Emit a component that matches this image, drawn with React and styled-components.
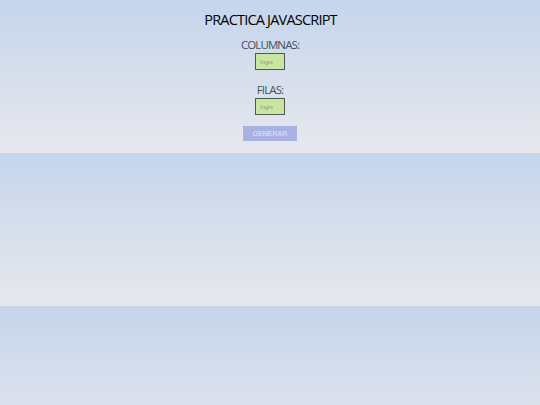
import styled, { createGlobalStyle } from 'styled-components';

const GlobalStyle = createGlobalStyle`
    html {
        background: linear-gradient(180deg, #c5d5ec 0%, #e7e8ec 100%);
        background-size: 100% 153px;
        background-repeat: repeat;
        min-height: 100%;
    }
    body {
        margin: 0;
        font-family: "Open Sans", "Liberation Sans", sans-serif;
    }
`

export default function App () {
    return (
        <Page>
            <GlobalStyle />
            <Title>PRACTICA JAVASCRIPT</Title>
            <Field $gap={9}>
                <Label>COLUMNAS:</Label>
                <NumberInput placeholder="Ingrese" />
            </Field>
            <Field $gap={13}>
                <Label>FILAS:</Label>
                <NumberInput placeholder="Ingrese" />
            </Field>
            <GenerateButton>GENERAR</GenerateButton>
        </Page>
    )
}

const Page = styled.div`
    display: flex;
    flex-direction: column;
    align-items: center;
    padding-top: 11px;
`
const Title = styled.h1`
    margin: 0;
    font-size: 14.5px;
    line-height: 18px;
    font-weight: 500;
    color: #000000;
    letter-spacing: -0.8px;
    padding-left: 1px;
`
const Field = styled.div`
    display: flex;
    flex-direction: column;
    align-items: center;
    margin-top: ${props => props.$gap}px;
`
const Label = styled.label`
    font-size: 11.5px;
    line-height: 14px;
    color: #3f5162;
    letter-spacing: -0.9px;
    margin-bottom: 1px;
`
const NumberInput = styled.input`
    box-sizing: border-box;
    width: 30px;
    height: 17px;
    background-color: #c8e6a2;
    border: 1px solid #4f5a4f;
    padding: 0 11px 0 4px;
    font-family: "Liberation Sans", sans-serif;
    font-size: 6px;
    outline: none;

    &::placeholder {
        color: #8a9a80;
    }
`
const GenerateButton = styled.button`
    width: 54px;
    height: 15px;
    margin-top: 11px;
    border: none;
    background-color: #a9b1e2;
    color: #e3e6f7;
    font-family: "Liberation Sans", sans-serif;
    font-size: 7px;
    padding: 0;
`
